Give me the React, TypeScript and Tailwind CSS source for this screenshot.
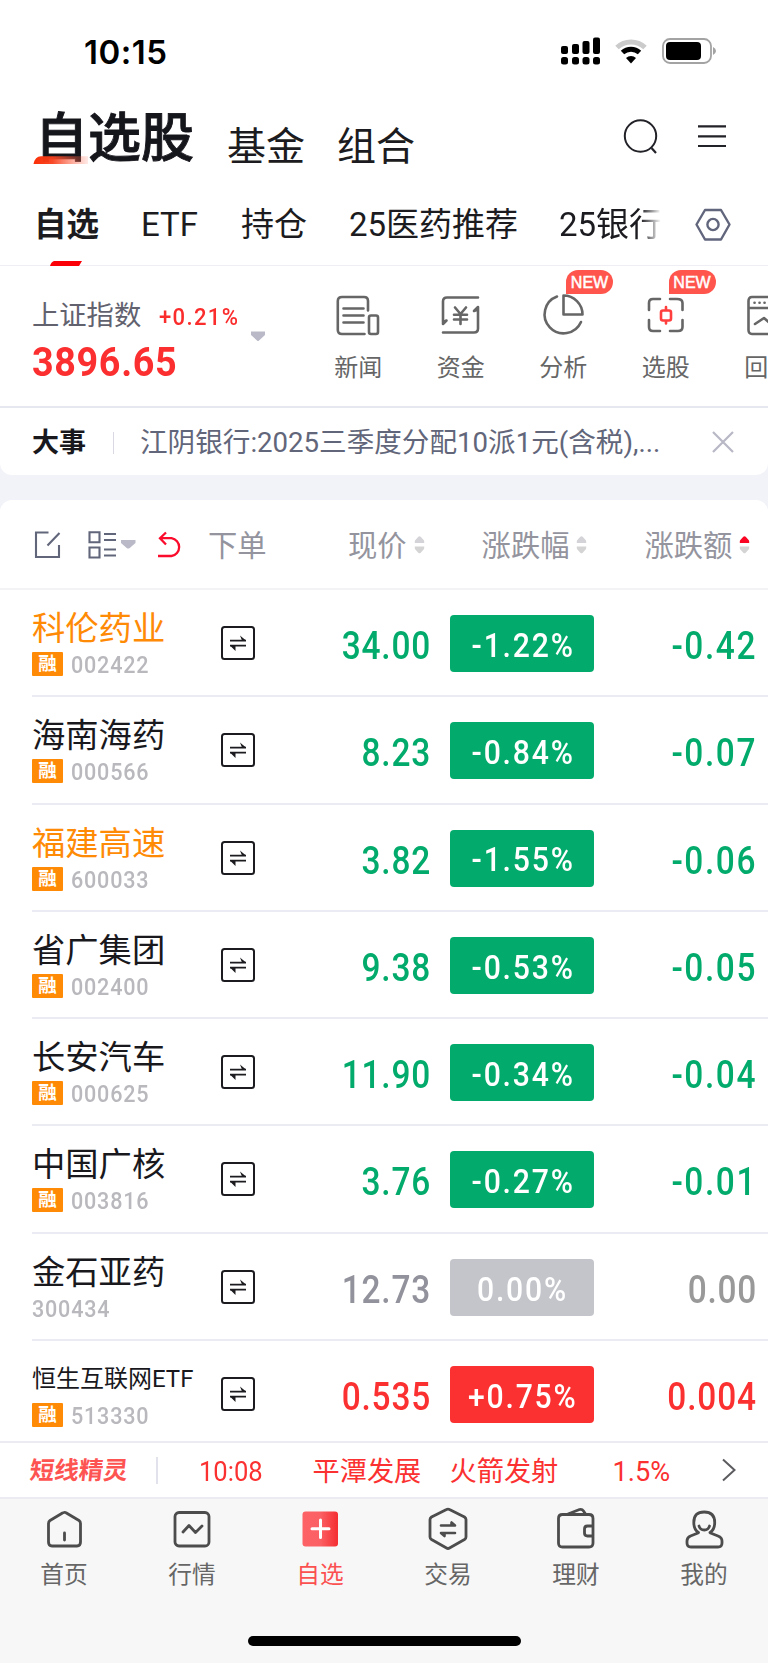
import type { ReactNode } from 'react';

type Stock = {
  name: string;
  code: string;
  margin: boolean;
  price: string;
  pct: string;
  diff: string;
  tone: 'down' | 'flat' | 'up';
  highlight?: boolean;
  small?: boolean;
};

const stocks: Stock[] = [
  { name: '科伦药业', code: '002422', margin: true, price: '34.00', pct: '-1.22%', diff: '-0.42', tone: 'down', highlight: true },
  { name: '海南海药', code: '000566', margin: true, price: '8.23', pct: '-0.84%', diff: '-0.07', tone: 'down' },
  { name: '福建高速', code: '600033', margin: true, price: '3.82', pct: '-1.55%', diff: '-0.06', tone: 'down', highlight: true },
  { name: '省广集团', code: '002400', margin: true, price: '9.38', pct: '-0.53%', diff: '-0.05', tone: 'down' },
  { name: '长安汽车', code: '000625', margin: true, price: '11.90', pct: '-0.34%', diff: '-0.04', tone: 'down' },
  { name: '中国广核', code: '003816', margin: true, price: '3.76', pct: '-0.27%', diff: '-0.01', tone: 'down' },
  { name: '金石亚药', code: '300434', margin: false, price: '12.73', pct: '0.00%', diff: '0.00', tone: 'flat' },
  { name: '恒生互联网ETF', code: '513330', margin: true, price: '0.535', pct: '+0.75%', diff: '0.004', tone: 'up', small: true },
];

const priceTone = { down: 'text-[#02ab6b]', flat: 'text-[#92929d]', up: 'text-[#fb3030]' };
const diffTone = { down: 'text-[#02ab6b] tracking-[1.800px]', flat: 'text-[#999999] tracking-[0.800px]', up: 'text-[#fb3030] tracking-[1px]' };
const pillTone = { down: 'bg-[#02ab6b]', flat: 'bg-[#c4c5ca]', up: 'bg-[#fb3030]' };

function StatusBar() {
  return (
    <div className="flex h-[102px] items-center pl-[84px] pr-[50px]">
      <span className="mt-[2px] font-['Inter'] text-[33px] leading-[40px] font-semibold tracking-[0.500px] text-black">10:15</span>
      <svg className="ml-auto" width="158" height="32" viewBox="560 35 158 32">
        <g fill="#000">
          <rect x="561" y="46" width="7" height="8" rx="2" />
          <rect x="572" y="44" width="7" height="10" rx="2" />
          <rect x="582.5" y="41" width="7" height="13" rx="2" />
          <rect x="593" y="37.500" width="7" height="16.500" rx="2" />
          <rect x="561" y="57" width="7" height="7.500" rx="2.500" />
          <rect x="572" y="57" width="7" height="7.500" rx="2.500" />
          <rect x="582.5" y="57" width="7" height="7.500" rx="2.500" />
          <rect x="593" y="57" width="7" height="7.500" rx="2.500" />
        </g>
        <path d="M617 47.500a20.500 20.500 0 0 1 28 0" fill="none" stroke="#cbcbcb" strokeWidth="5" />
        <path d="M622.500 52.500a12.500 12.500 0 0 1 17 0" fill="none" stroke="#000" strokeWidth="5" />
        <path d="M626 58a7.500 7.500 0 0 1 10 0l-5 5.500z" fill="#000" />
        <rect x="663" y="39" width="48" height="24" rx="7" fill="none" stroke="#a3a3a3" strokeWidth="1.800" />
        <rect x="666" y="42" width="35" height="18" rx="4" fill="#000" />
        <path d="M713 47q3 1.500 3 4t-3 4z" fill="#a3a3a3" />
      </svg>
    </div>
  );
}

function Title() {
  return (
    <div className="flex h-[78px] items-start pl-[35px]">
      <div className="relative mt-[7px] w-[160px] text-[53px] leading-[60px] font-medium text-[#15151c] [-webkit-text-stroke:0.900px_#15151c]">
        自选股
        <svg className="absolute top-[47px] left-[-2px]" width="56" height="9" viewBox="0 0 56 9">
          <defs>
            <linearGradient id="brush">
              <stop offset="0" stopColor="#fb2e06" />
              <stop offset="0.350" stopColor="#f8401d" stopOpacity="0.950" />
              <stop offset="1" stopColor="#ff6b50" stopOpacity="0.150" />
            </linearGradient>
          </defs>
          <path d="M0.500 8Q2 .5 8 .3H55V8z" fill="url(#brush)" />
        </svg>
      </div>
      <span className="mt-[17px] ml-[32px] text-[39px] leading-[56px] text-[#1b1b20]">基金</span>
      <span className="mt-[17px] ml-[32px] text-[39px] leading-[56px] text-[#1b1b20]">组合</span>
      <svg className="mt-[13px] ml-auto mr-[40px]" width="108" height="44" viewBox="620 115 108 44" fill="none" stroke="#222229">
        <circle cx="640.500" cy="136" r="15.700" strokeWidth="2" />
        <path d="M651.500 148l4.500 5" strokeWidth="2.200" />
        <path d="M698 126.300h28M698 136.300h28M698 146h28" strokeWidth="2.200" />
      </svg>
    </div>
  );
}

function Tabs() {
  return (
    <div className="flex h-[86px] items-center border-b-[1.500px] border-[#eeeef4] pt-[4px] text-[33px] leading-[48px] text-[#1b1b20]">
      <div className="relative ml-[34px] w-[65px] text-[32.500px] font-bold">
        自选
        <svg className="absolute top-[60px] left-[16px]" width="32" height="5" viewBox="0 0 32 5">
          <path d="M4 0H32L29 5H0Q1 1 4 0z" fill="#fb0007" />
        </svg>
      </div>
      <span className="ml-[42px] w-[58px]">ETF</span>
      <span className="ml-[42px] w-[66px]">持仓</span>
      <span className="ml-[42px] w-[170px] whitespace-nowrap">25医药推荐</span>
      <span className="ml-[40px] w-[102px] bg-linear-to-r from-[#1b1b20] from-80% to-transparent bg-clip-text whitespace-nowrap text-transparent">25银行</span>
      <svg className="ml-[34px]" width="36" height="36" viewBox="695 206 36 36" fill="none" stroke="#62667d" strokeWidth="2.400" strokeLinejoin="round">
        <path d="M705 209h16l8.500 14.500L721 238.500h-16l-8.500-15z" />
        <circle cx="713" cy="223.500" r="5.600" />
      </svg>
    </div>
  );
}

function Shortcut({ label, badge, clipped, children }: { label: string; badge?: boolean; clipped?: boolean; children: ReactNode }) {
  return (
    <div className="relative flex w-[102.500px] shrink-0 flex-col items-center pt-[27px]">
      <svg width="46" height="46" viewBox="0 0 46 46" fill="none" stroke="#666" strokeWidth="2.600" strokeLinecap="round" strokeLinejoin="round">
        {children}
      </svg>
      <span className={`mt-[14px] text-[24px] leading-[30px] text-[#666] ${clipped ? 'mr-[24px]' : ''}`}>{label}</span>
      {badge && (
        <span className="absolute top-[4px] left-[54px] flex h-[24px] w-[47px] items-center justify-center rounded-full rounded-bl-none bg-[#ff554c] pt-px font-['Liberation_Sans'] text-[16px] leading-none text-white [-webkit-text-stroke:0.500px_white]">
          NEW
        </span>
      )}
    </div>
  );
}

function IndexBar() {
  return (
    <div className="flex h-[142px] overflow-hidden border-b-2 border-[#e6e8f0]">
      <div className="w-[219px] shrink-0 pt-[30px] pl-[32px]">
        <div className="flex items-baseline leading-[40px] whitespace-nowrap">
          <span className="text-[27.300px] text-[#62626f]">上证指数</span>
          <span className="ml-[18px] origin-left scale-x-90 pt-px text-[24.500px] font-medium tracking-[1.500px] text-[#fb2c2c]">+0.21%</span>
        </div>
        <div className="mt-[-2px] origin-left scale-x-[0.920] text-[41px] leading-[54px] font-bold tracking-[0.700px] text-[#fb2f2f]">3896.65</div>
      </div>
      <svg className="mt-[65px] ml-[31px] shrink-0" width="16" height="11" viewBox="0 0 16 11">
        <path d="M1 .5H15V4L9 9.500Q8 10.500 7 9.500L1 4z" fill="#b9b9c8" />
      </svg>
      <div className="ml-[41px] flex">
        <Shortcut label="新闻">
          <path d="M29.500 41H7Q2.800 41 2.800 37V8Q2.800 4 7 4H29Q33 4 33 8V17.500M8.500 15.500H28.500M8.500 22.500H28.500M8.500 29.500H28.500" />
          <rect x="34" y="22.500" width="9" height="18.500" rx="2" />
        </Shortcut>
        <Shortcut label="资金">
          <path d="M40 4.500H9Q5 4.500 5 8.500V31L8.500 27.500L5 29.500M5 39.500H36Q40 39.500 40 35.500V14L36 18L40 16.500" />
          <path d="M17 14.500l5.500 6.500L28 14.500M16 21.800h13M16 26.500h13M22.500 21.500v9.500" />
        </Shortcut>
        <Shortcut label="分析" badge>
          <path d="M17 3.500A19 19 0 1 0 41 29M23.500 2.500V21.500H42.500A19 19 0 0 0 23.500 2.500z" />
        </Shortcut>
        <Shortcut label="选股" badge>
          <path d="M6 17V10Q6 6 10 6H17M27 6H34Q39.500 6 39.500 10V17M39.500 27V34Q39.500 38 35 38H27M17 38H10Q6 38 6 34V27" />
          <path d="M20 17.500h6q2 0 2 2v6q0 2-2 2h-6q-2 0-2-2v-6q0-2 2-2zM23 14v3M23 28v2.500" stroke="#ff3e3e" />
        </Shortcut>
        <Shortcut label="回" clipped>
          <path d="M24 41H7Q3.500 41 3.500 37V8Q3.500 4 7 4H37Q41 4 41 8V35Q41 41 36 41H24M4 15H41M10 31L19 25L26 31L35 22" />
          <path d="M9.500 9.700h.1M14.500 9.700h.1M19.500 9.700h.1" />
        </Shortcut>
      </div>
    </div>
  );
}

function NewsBar() {
  return (
    <div className="flex h-[67px] shrink-0 items-center rounded-b-[12px] bg-white pl-[32px] text-[27.600px] leading-[40px] whitespace-nowrap">
      <span className="w-[55px] pt-[2px] text-[27px] font-bold text-[#18181d]">大事</span>
      <span className="mt-[3px] ml-[25.500px] h-[22px] w-[1.500px] bg-[#d8d9e2]" />
      <span className="ml-[26px] w-[519px] pt-[2px] text-[#62667a]">江阴银行:2025三季度分配10派1元(含税),...</span>
      <svg className="ml-[53px]" width="22" height="22" viewBox="0 0 22 22" stroke="#b8b8c6" strokeWidth="2.200">
        <path d="M1 1L21 21M21 1L1 21" />
      </svg>
    </div>
  );
}

function SortArrows({ active }: { active?: boolean }) {
  return (
    <svg className="mt-[-3px]" width="11" height="20" viewBox="0 0 11 20">
      <path d="M.8 8V6.500Q.8 5.500 1.600 4.700L4.300 1.800Q5.500.6 6.700 1.800L9.400 4.700Q10.200 5.500 10.200 6.500V8z" fill={active ? '#fb0524' : '#d4d4d8'} />
      <path d="M.8 11.500V13Q.8 14 1.600 14.800L4.300 17.700Q5.500 18.900 6.700 17.700L9.400 14.800Q10.200 14 10.200 13V11.500z" fill="#d4d4d4" />
    </svg>
  );
}

function ListHeader() {
  return (
    <div className="flex h-[90px] shrink-0 items-center rounded-t-[12px] border-b-2 border-[#f3f3f6] bg-white pt-[4px] text-[29.300px] leading-[40px] whitespace-nowrap text-[#94949e]">
      <svg className="mt-[-3px] ml-[32px] shrink-0" width="152" height="32" viewBox="32 529 152 32" fill="none" stroke="#62667b" strokeWidth="2.100">
        <path d="M48.500 532.500H36V557H59V545M47.500 545.500L59.500 533" />
        <path d="M89.500 532.300h10v10h-10zM89.500 547.500h10v10h-10zM104 534h12M104 540h12M104 549.500h12M104 555.500h12" />
        <path d="M121 540h14.500v3l-5.800 5q-1.500 1.200-3 0l-5.700-5z" fill="#b9b9c8" stroke="none" />
        <path d="M158 556H171.500A9 9 0 0 0 171.500 538.200H160M166 532.500L160 538.200L166 544.500" stroke="#fb0b2c" strokeWidth="2.300" />
      </svg>
      <span className="ml-[24px] w-[60px]">下单</span>
      <div className="ml-[80px] flex items-center gap-[7px]">现价<SortArrows /></div>
      <div className="ml-[57px] flex items-center gap-[7px]">涨跌幅<SortArrows /></div>
      <div className="ml-[57px] flex items-center gap-[7px]">涨跌额<SortArrows active /></div>
    </div>
  );
}

function StockRow({ stock }: { stock: Stock }) {
  const nameColor = stock.highlight ? 'text-[#ff8a05]' : 'text-[#18181d]';
  const nameSize = stock.small ? 'text-[24px]' : 'text-[33.300px] pt-px';
  return (
    <div className="ml-[32px] flex h-[107.300px] shrink-0 border-b-2 border-[#ebebf3]">
      <div className="w-[189px] shrink-0 pt-[17px]">
        <div className={`h-[44px] leading-[42px] whitespace-nowrap ${nameColor} ${nameSize}`}>{stock.name}</div>
        <div className="flex h-[26px] items-center gap-[8px]">
          {stock.margin && (
            <span className="flex h-[24px] w-[31px] items-center justify-center rounded-[1px] bg-[#ff8a05] text-[18.500px] leading-[22px] font-bold text-white">融</span>
          )}
          <span className="origin-left scale-x-[0.880] pt-[2px] text-[24.500px] leading-[26px] font-medium tracking-[0.900px] text-[#b8b8bd]">{stock.code}</span>
        </div>
      </div>
      <svg className="mt-[36px] shrink-0" width="34" height="34" viewBox="0 0 34 34" fill="none" stroke="#1c1c20" strokeWidth="2">
        <rect x="1" y="1" width="32" height="32" rx="2.500" />
        <path d="M9 14.700H25M9 19.700H25" strokeWidth="1.800" />
        <path d="M19 9.500L25 14.500H21zM9 19.500L14.500 25V20z" fill="#1c1c20" stroke="none" />
      </svg>
      <div className={`mt-[32px] w-[176px] origin-right scale-x-[0.880] text-right text-[38px] leading-[48px] font-medium tracking-[0.900px] ${priceTone[stock.tone]}`}>{stock.price}</div>
      <div className={`mt-[25px] ml-[19px] flex h-[57px] w-[144px] items-center justify-center rounded-[4px] pt-[4px] text-[33.500px] leading-none font-medium text-white ${pillTone[stock.tone]}`}>
        <span className="scale-x-90 pl-[2px] tracking-[2px]">{stock.pct}</span>
      </div>
      <div className={`mt-[32px] w-[163px] origin-right scale-x-[0.880] text-right text-[38px] leading-[48px] font-medium ${diffTone[stock.tone]}`}>{stock.diff}</div>
    </div>
  );
}

function Ticker() {
  return (
    <div className="flex h-[58px] shrink-0 items-center border-y-2 border-[#ebebf1] bg-white text-[27.200px] leading-[40px] whitespace-nowrap text-[#fb3030]">
      <span className="ml-[30px] w-[98px] -skew-x-6 pt-px text-[24.500px] font-bold text-[#fd5452]">短线精灵</span>
      <span className="ml-[28px] h-[27px] w-[1.500px] bg-[#e2e2ec]" />
      <span className="ml-[41px] w-[70px] origin-left scale-x-[0.940] pt-[3px]">10:08</span>
      <span className="ml-[44px] w-[109px] pt-[3px]">平潭发展</span>
      <span className="ml-[28px] w-[109px] pt-[3px]">火箭发射</span>
      <span className="ml-[54px] w-[60px] pt-[3px]">1.5%</span>
      <svg className="ml-[49px]" width="14" height="24" viewBox="0 0 14 24" fill="none" stroke="#5c5c60" strokeWidth="2">
        <path d="M1 1.500L12.500 12L1 22.500" />
      </svg>
    </div>
  );
}

function NavItem({ label, active, children }: { label: string; active?: boolean; children: ReactNode }) {
  return (
    <div className="flex w-[128px] flex-col items-center pt-[7px]">
      <svg width="46" height="46" viewBox="0 0 46 46" fill="none" stroke="#4c4c4c" strokeWidth="2.800" strokeLinecap="round" strokeLinejoin="round">
        {children}
      </svg>
      <span className={`mt-[7px] text-[23.700px] leading-[32px] ${active ? 'text-[#fb5050]' : 'text-[#666]'}`}>{label}</span>
    </div>
  );
}

function BottomNav() {
  return (
    <div className="flex h-[164px] shrink-0 flex-col items-center bg-[#f7f7f7]">
      <div className="flex h-[137px]">
        <NavItem label="首页">
          <path d="M23 6.500Q24 6 25 6.700L38 14.500Q39.500 15.500 39.500 17.500V36Q39.500 40 36 40H11Q7.500 40 7.500 36V17.500Q7.500 15.500 9 14.500L21.500 7zM23.500 27V34" />
        </NavItem>
        <NavItem label="行情">
          <rect x="6" y="6.500" width="34" height="33.500" rx="4" />
          <path d="M14 26L20 19.500L26.500 26.500L33 20" />
        </NavItem>
        <NavItem label="自选" active>
          <defs>
            <linearGradient id="plus"><stop offset="0" stopColor="#fc6266" /><stop offset="0.500" stopColor="#fb6064" /><stop offset="1" stopColor="#f42d31" /></linearGradient>
          </defs>
          <rect x="5.500" y="5.500" width="35.500" height="35" rx="3" fill="url(#plus)" stroke="none" />
          <path d="M23.500 14V31.500M15 22.700H32" stroke="#fff" strokeWidth="3" />
        </NavItem>
        <NavItem label="交易">
          <path d="M21.500 3.500Q23 2.700 24.500 3.500L39.500 11Q41 12 41 13.500V31Q41 32.500 39.500 33.500L24.500 42Q23 43 21.500 42L6.500 33.500Q5 32.500 5 31V13.500Q5 12 6.500 11z" />
          <path d="M16 19.500H30L26.500 16.500V19M30 27H16L19.500 30V27" strokeWidth="2.600" />
        </NavItem>
        <NavItem label="理财">
          <path d="M9.500 8.500H36Q40 8.500 40 12.500V37Q40 41 36 41H9.500Q5.500 41 5.500 37V12.500Q5.500 8.500 9.500 8.500zM40 20H34.500Q31.500 20 31.500 23V27Q31.500 30 34.500 30H40M15 8L26.500 3.500Q29 2.800 30.500 5L32.500 8" />
        </NavItem>
        <NavItem label="我的">
          <path d="M17.500 26.500C13 24 12.800 20 12.800 16.500Q12.800 6 23.200 6Q33.700 6 33.700 16.500C33.700 20 33.500 24 29 26.500M17 27L9.500 30Q6 31.500 6 35V37Q6 41 10 41H37Q41 41 41 37V35Q41 31.500 37 30L29.500 27M18 20Q19 24 23.300 24Q27.500 24 28.500 20" />
        </NavItem>
      </div>
      <div className="h-[10px] w-[273px] rounded-full bg-black" />
    </div>
  );
}

export default function App() {
  return (
    <div className="flex h-[1663px] w-[768px] flex-col overflow-hidden bg-[#f2f3f9] font-['Roboto','Noto_Sans_CJK_SC',sans-serif]">
      <div className="shrink-0 bg-white">
        <StatusBar />
        <Title />
        <Tabs />
        <IndexBar />
      </div>
      <NewsBar />
      <div className="h-[25px] shrink-0" />
      <div className="flex h-[941px] shrink-0 flex-col overflow-hidden rounded-t-[12px] bg-white">
        <ListHeader />
        {stocks.map((stock) => (
          <StockRow key={stock.code} stock={stock} />
        ))}
      </div>
      <Ticker />
      <BottomNav />
    </div>
  );
}
